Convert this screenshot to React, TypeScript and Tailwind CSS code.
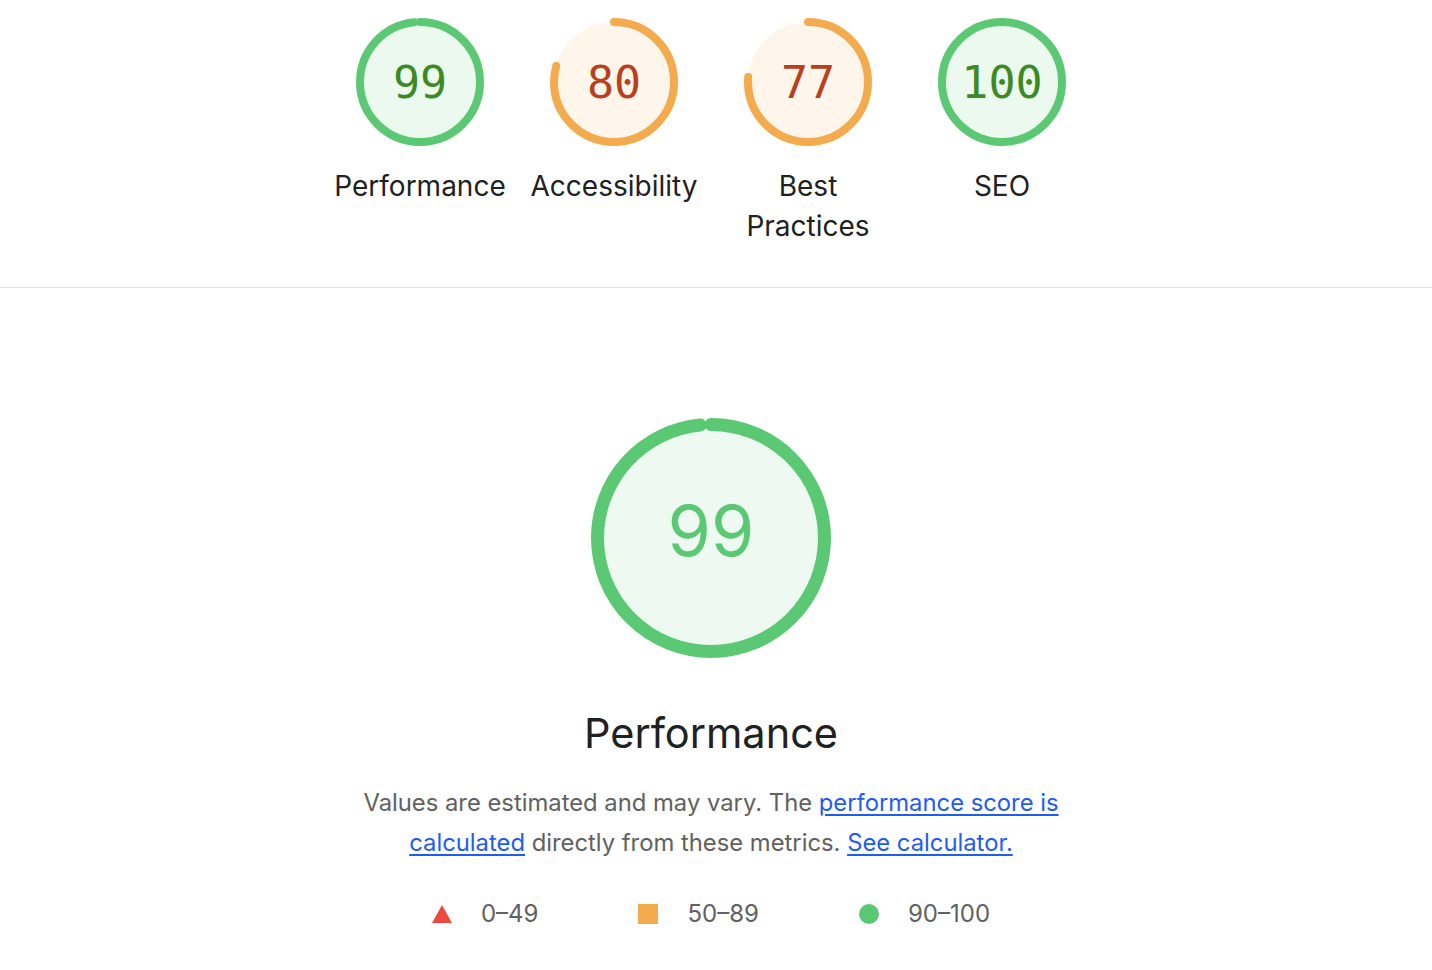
import React from 'react';

type Tone = 'pass' | 'average';

const TONES: Record<Tone, { ring: string; fill: string; text: string }> = {
  pass: { ring: '#5bc973', fill: '#ecf9ef', text: 'text-[#3b8a22]' },
  average: { ring: '#f4ab4e', fill: '#fef5eb', text: 'text-[#b9401a]' },
};

const Arc = ({ size, stroke, score, ring, fill }: { size: number; stroke: number; score: number; ring: string; fill: string }) => {
  const c = size / 2;
  const r = c - stroke / 2;
  const circ = 2 * Math.PI * r;
  const len = (score / 100) * circ;
  return (
    <svg width={size} height={size} viewBox={`0 0 ${size} ${size}`} className="absolute inset-0">
      <circle cx={c} cy={c} r={r} fill={fill} />
      <circle
        cx={c}
        cy={c}
        r={r}
        fill="none"
        stroke={ring}
        strokeWidth={stroke}
        strokeLinecap="round"
        strokeDasharray={`${score >= 100 ? circ : len - stroke * 0.35} ${circ}`}
        transform={`rotate(-90 ${c} ${c})`}
      />
    </svg>
  );
};

const SmallGauge = ({ score, label, tone }: { score: number; label: string; tone: Tone }) => {
  const t = TONES[tone];
  return (
    <div className="flex w-[194px] flex-col items-center">
      <div className="relative flex h-[128px] w-[128px] items-center justify-center">
        <Arc size={128} stroke={8} score={score} ring={t.ring} fill={t.fill} />
        <span className={`relative font-['DejaVu_Sans_Mono',monospace] text-[45px] leading-none ${t.text}`}>{score}</span>
      </div>
      <div className="mt-5 px-2 text-center text-[28px] leading-[40px] text-[#212121]">{label}</div>
    </div>
  );
};

const Legend = ({ children, label }: { children: React.ReactNode; label: string }) => (
  <div className="flex items-center gap-[29px]">
    {children}
    <span>{label}</span>
  </div>
);

export default function App() {
  return (
    <div className="min-h-screen bg-white font-['Inter','Noto_Sans',sans-serif]">
      <div className="flex justify-center pr-[10px] pt-[18px] pb-[41px]">
        <SmallGauge score={99} label="Performance" tone="pass" />
        <SmallGauge score={80} label="Accessibility" tone="average" />
        <SmallGauge score={77} label="Best Practices" tone="average" />
        <SmallGauge score={100} label="SEO" tone="pass" />
      </div>
      <div className="h-px bg-[#e0e0e0]" />

      <div className="flex flex-col items-center pr-[10px] pt-[130px]">
        <div className="relative flex h-[240px] w-[240px] items-center justify-center">
          <Arc size={240} stroke={13} score={99} ring="#5bc973" fill="#eef9f1" />
          <span className="relative -mt-[14px] text-[70px] leading-none text-[#5bc973]">99</span>
        </div>
        <h2 className="mt-[51px] text-[41.5px] leading-[48px] text-[#212121]">Performance</h2>
        <p className="mt-[26px] w-[720px] text-center text-[23.8px] leading-[40px] text-[#616161]">
          Values are estimated and may vary. The{' '}
          <a href="#" className="text-[#1f5bf5] underline underline-offset-[3px]">performance score is calculated</a>{' '}
          directly from these metrics.{' '}
          <a href="#" className="text-[#1f5bf5] underline underline-offset-[3px]">See calculator.</a>
        </p>
        <div className="mt-[31px] flex items-center gap-[100px] text-[24px] leading-[40px] text-[#616161]">
          <Legend label="0–49">
            <svg width="20" height="18" viewBox="0 0 20 18">
              <polygon points="10,0 20,18 0,18" fill="#eb4a3c" />
            </svg>
          </Legend>
          <Legend label="50–89">
            <span className="h-5 w-5 bg-[#f4ab4e]" />
          </Legend>
          <Legend label="90–100">
            <span className="h-5 w-5 rounded-full bg-[#5bc973]" />
          </Legend>
        </div>
      </div>
    </div>
  );
}
